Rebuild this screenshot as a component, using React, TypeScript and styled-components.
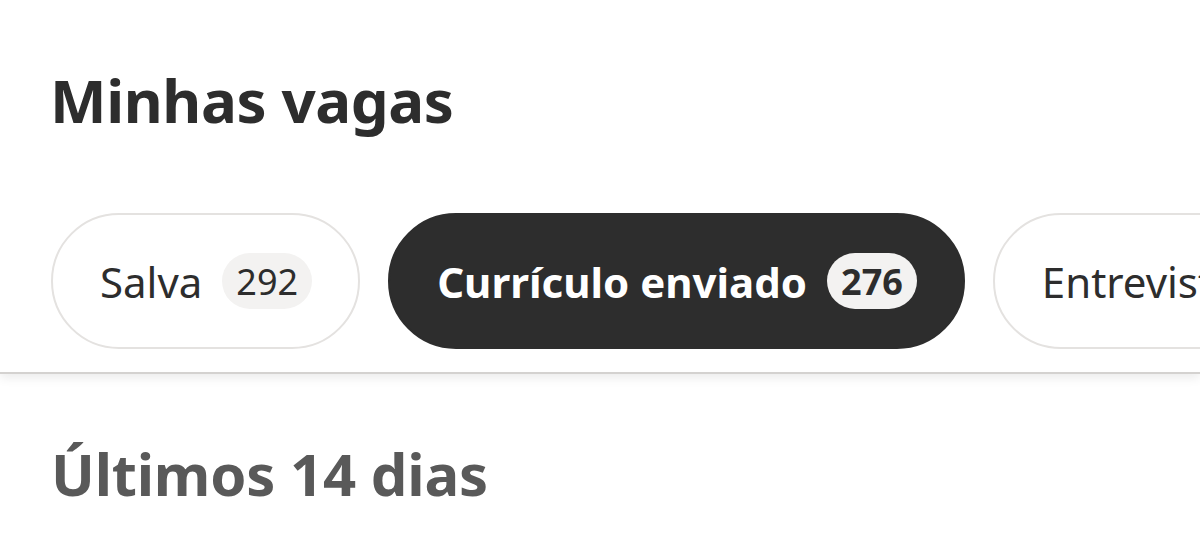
import styled, { createGlobalStyle } from 'styled-components'

const GlobalStyle = createGlobalStyle`
  html, body {
    margin: 0;
    padding: 0;
    background: #fff;
    font-family: 'Noto Sans', 'Open Sans', sans-serif;
    color: #2d2d2d;
    overflow: hidden;
  }
`

const Page = styled.div`
  width: 1200px;
  height: 554px;
  overflow: hidden;
  background: #fff;
`

const Header = styled.header`
  padding: 70px 0 23px 52px;
  border-bottom: 2px solid #d4d2d0;
  box-shadow: 0 4px 10px rgba(0, 0, 0, 0.08);
  position: relative;
`

const Title = styled.h1`
  margin: 0 0 83px -2px;
  font-size: 60px;
  line-height: 1;
  font-weight: 700;
  letter-spacing: -0.4px;
  color: #2d2d2d;
`

const Tabs = styled.div`
  display: flex;
  gap: 28px;
  margin-left: -1px;
  white-space: nowrap;
`

const Pill = styled.button<{ $active?: boolean }>`
  flex-shrink: 0;
  display: flex;
  align-items: center;
  gap: 20px;
  height: 136px;
  padding: 0 46px 0 47px;
  border-radius: 68px;
  border: 2px solid ${({ $active }) => ($active ? '#2d2d2d' : '#e4e2e0')};
  background: ${({ $active }) => ($active ? '#2d2d2d' : '#fff')};
  color: ${({ $active }) => ($active ? '#fff' : '#2d2d2d')};
  font-family: inherit;
  font-size: 42px;
  font-weight: ${({ $active }) => ($active ? 700 : 400)};
  cursor: pointer;
`

const Count = styled.span<{ $active?: boolean }>`
  display: inline-flex;
  align-items: center;
  justify-content: center;
  height: 56px;
  padding: 0 14px;
  border-radius: 28px;
  background: #f3f2f1;
  color: #2d2d2d;
  font-size: 36px;
  font-weight: ${({ $active }) => ($active ? 700 : 400)};
`

const Section = styled.h2`
  margin: 0;
  padding: 71px 0 0 51px;
  font-size: 58px;
  line-height: 1;
  font-weight: 700;
  letter-spacing: -0.2px;
  color: #595959;
`

const tabs = [
  { label: 'Salva', count: 292 },
  { label: 'Currículo enviado', count: 276, active: true },
  { label: 'Entrevistas', count: 3 },
]

export default function App() {
  return (
    <Page>
      <GlobalStyle />
      <Header>
        <Title>Minhas vagas</Title>
        <Tabs>
          {tabs.map((t) => (
            <Pill key={t.label} $active={t.active}>
              {t.label}
              <Count $active={t.active}>{t.count}</Count>
            </Pill>
          ))}
        </Tabs>
      </Header>
      <Section>Últimos 14 dias</Section>
    </Page>
  )
}
